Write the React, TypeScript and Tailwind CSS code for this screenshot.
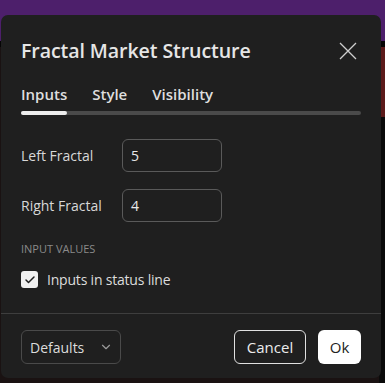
import { Check, ChevronDown } from "lucide-react";

const font = { fontFamily: '"Open Sans", "Noto Sans", sans-serif' };

function Field({ label, value }: { label: string; value: string }) {
  return (
    <div className="flex items-center h-[33px]">
      <span className="w-[101px] text-[14px] text-[#d8d8d8]">{label}</span>
      <div className="w-[100px] h-[33px] rounded-[6px] border border-[#5a5a5a] flex items-center px-[8px] text-[14px] text-[#e8e8e8]">
        {value}
      </div>
    </div>
  );
}

export default function App() {
  return (
    <div className="relative w-[385px] h-[383px] overflow-hidden bg-[#0d0d0d]" style={font}>
      {/* Background behind the dialog */}
      <div className="flex flex-col h-full">
        <div className="h-[41px] bg-[#4d1f6b]" />
        <div className="h-[6px] bg-[#050505]" />
        <div className="flex flex-1">
          <div className="flex-1 bg-[#1a1212]" />
          <div className="w-[6px] flex flex-col">
            <div className="h-[70px] bg-[#5c1a1a]" />
            <div className="flex-1 bg-[#0a0a0a]" />
          </div>
        </div>
      </div>

      {/* Dialog */}
      <div className="absolute left-[1px] top-[15px] w-[380px] h-[363px] rounded-[7px] bg-[#1f1f1f] flex flex-col">
        <div className="flex items-center justify-between pl-[20px] pr-[24px] pt-[21px] h-[50px]">
          <h1 className="text-[19.6px] font-semibold text-[#e6e6e6] tracking-[-0.1px]">
            Fractal Market Structure
          </h1>
          <svg width="18" height="18" viewBox="0 0 18 18" className="text-[#cfcfcf]">
            <path d="M1 1L17 17M17 1L1 17" stroke="currentColor" strokeWidth="1.3" />
          </svg>
        </div>

        <div className="px-[20px] mt-[18px]">
          <div className="flex gap-[25px] text-[15px] font-semibold text-[#dedede]">
            <span>Inputs</span>
            <span>Style</span>
            <span>Visibility</span>
          </div>
          <div className="mt-[5px] h-[4px] rounded-full bg-[#4a4a4a] w-[340px]">
            <div className="h-[4px] w-[46px] rounded-full bg-[#ededed]" />
          </div>
        </div>

        <div className="px-[20px] mt-[24px] flex flex-col gap-[17px]">
          <Field label="Left Fractal" value="5" />
          <Field label="Right Fractal" value="4" />
        </div>

        <div className="px-[20px] mt-[19px] text-[11px] text-[#8a8a8a] uppercase">Input values</div>

        <div className="px-[20px] mt-[12px] flex items-center gap-[9px]">
          <div className="w-[17px] h-[17px] rounded-[3px] bg-[#f0f0f0] flex items-center justify-center">
            <Check className="w-[12px] h-[12px] text-[#1f1f1f]" strokeWidth={3} />
          </div>
          <span className="text-[14px] text-[#dcdcdc] tracking-[-0.2px]">Inputs in status line</span>
        </div>

        <div className="mt-[23px] h-px bg-[#3e3e3e]" />

        <div className="flex items-center px-[20px] pt-[16px]">
          <div className="w-[100px] h-[34px] rounded-[6px] border border-[#4a4a4a] flex items-center justify-between pl-[8px] pr-[7px] text-[14px] text-[#dcdcdc]">
            <span>Defaults</span>
            <ChevronDown className="w-[14px] h-[14px] text-[#9a9a9a]" />
          </div>
          <div className="flex-1" />
          <div className="w-[72px] h-[34px] rounded-[6px] border border-[#e0e0e0] flex items-center justify-center text-[15px] text-[#ececec]">
            Cancel
          </div>
          <div className="ml-[12px] w-[43px] h-[34px] rounded-[6px] bg-white flex items-center justify-center text-[15px] text-[#222]">
            Ok
          </div>
        </div>
      </div>
    </div>
  );
}
